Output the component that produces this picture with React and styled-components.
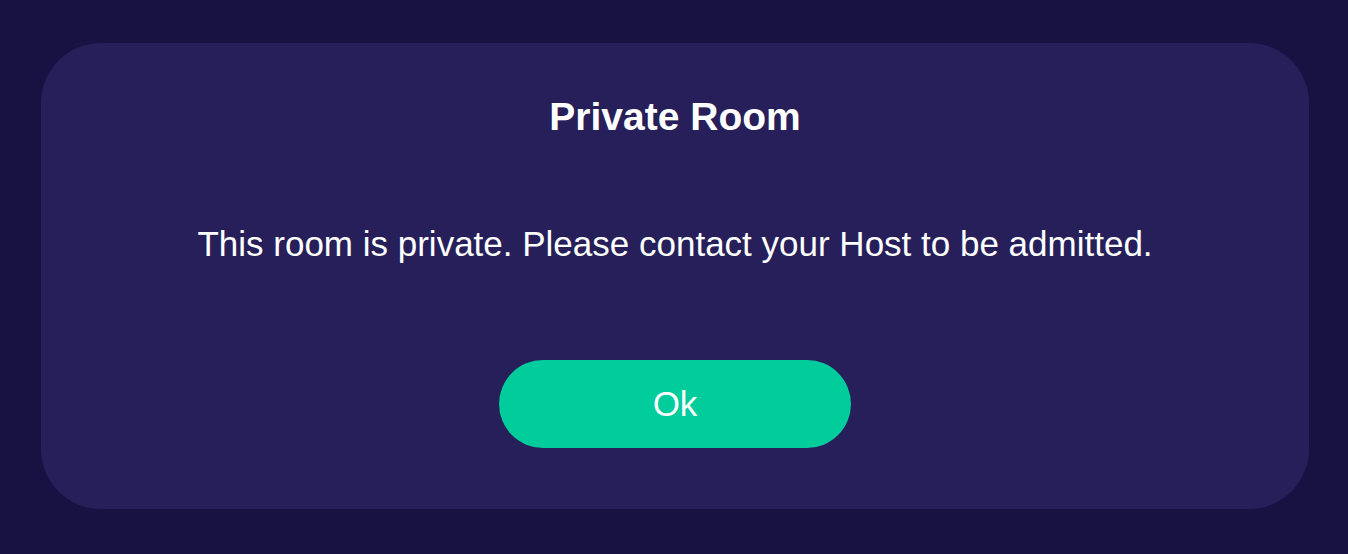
import React from "react";
import styled, { createGlobalStyle } from "styled-components";

const Global = createGlobalStyle`
  html, body {
    margin: 0;
    padding: 0;
    background: #181243;
  }
  body {
    font-family: "Liberation Sans", Arial, sans-serif;
  }
`;

const Page = styled.div`
  box-sizing: border-box;
  width: 1348px;
  height: 554px;
  padding: 43px 39px 45px 41px;
  display: flex;
`;

const Card = styled.div`
  box-sizing: border-box;
  flex: 1;
  background: #271f59;
  border-radius: 60px;
  padding: 50px 0 61px;
  display: flex;
  flex-direction: column;
  align-items: center;
  color: #ffffff;
`;

const Title = styled.h2`
  margin: 0;
  font-size: 39px;
  line-height: 47px;
  font-weight: 700;
`;

const Message = styled.p`
  margin: 83px 0 0;
  font-size: 35px;
  line-height: 42px;
`;

const Button = styled.button`
  margin-top: 95px;
  width: 352px;
  height: 88px;
  border: none;
  border-radius: 44px;
  background: #00cc9c;
  color: #ffffff;
  font-family: inherit;
  font-size: 35px;
  cursor: pointer;
`;

export default function App() {
  return (
    <>
      <Global />
      <Page>
        <Card>
          <Title>Private Room</Title>
          <Message>This room is private. Please contact your Host to be admitted.</Message>
          <Button>Ok</Button>
        </Card>
      </Page>
    </>
  );
}
